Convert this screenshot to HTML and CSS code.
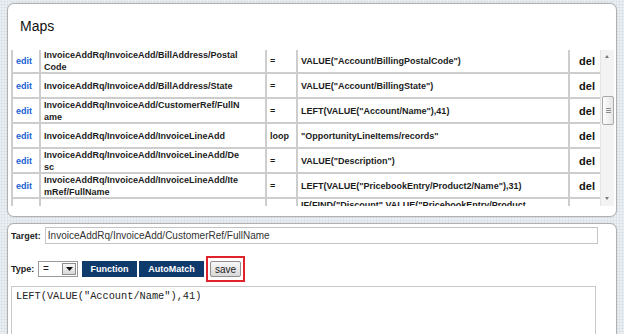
FILE: index.html
```html
<!DOCTYPE html>
<html>
<head>
<meta charset="utf-8">
<link rel="stylesheet" href="styles.css">
</head>
<body>
<div class="panel maps">
  <div class="title">Maps</div>
  <div class="scroller">
    <div class="viewport">
      <div class="grid">
        <div class="c edit">edit</div><div class="c path">InvoiceAddRq/InvoiceAdd/BillAddress/Postal<br>Code</div><div class="c op">=</div><div class="c val">VALUE("Account/BillingPostalCode")</div><div class="c del">del</div>
        <div class="c edit">edit</div><div class="c path">InvoiceAddRq/InvoiceAdd/BillAddress/State</div><div class="c op">=</div><div class="c val">VALUE("Account/BillingState")</div><div class="c del">del</div>
        <div class="c edit">edit</div><div class="c path">InvoiceAddRq/InvoiceAdd/CustomerRef/FullN<br>ame</div><div class="c op">=</div><div class="c val">LEFT(VALUE("Account/Name"),41)</div><div class="c del">del</div>
        <div class="c edit">edit</div><div class="c path">InvoiceAddRq/InvoiceAdd/InvoiceLineAdd</div><div class="c op">loop</div><div class="c val">"OpportunityLineItems/records"</div><div class="c del">del</div>
        <div class="c edit">edit</div><div class="c path">InvoiceAddRq/InvoiceAdd/InvoiceLineAdd/De<br>sc</div><div class="c op">=</div><div class="c val">VALUE("Description")</div><div class="c del">del</div>
        <div class="c edit">edit</div><div class="c path">InvoiceAddRq/InvoiceAdd/InvoiceLineAdd/Ite<br>mRef/FullName</div><div class="c op">=</div><div class="c val">LEFT(VALUE("PricebookEntry/Product2/Name"),31)</div><div class="c del">del</div>
        <div class="c edit">edit</div><div class="c path">InvoiceAddRq/InvoiceAdd/InvoiceLineAdd/Rate</div><div class="c op">=</div><div class="c val">IF(FIND("Discount",VALUE("PricebookEntry/Product<br>2/Name")),0,VALUE("UnitPrice"))</div><div class="c del">del</div>
      </div>
    </div>
    <div class="sbar">
      <div class="arrow up"></div>
      <div class="track">
        <div class="thumb"><span class="grip"></span></div>
      </div>
      <div class="arrow down"></div>
    </div>
  </div>
</div>

<div class="panel editor">
  <div class="row target">
    <span class="lbl">Target:</span>
    <div class="input">InvoiceAddRq/InvoiceAdd/CustomerRef/FullName</div>
  </div>
  <div class="row type">
    <span class="lbl">Type:</span>
    <div class="select"><span class="sel-val">=</span><span class="sel-btn"><svg width="7" height="4" viewBox="0 0 7 4"><path d="M0 0H7L3.5 4Z" fill="#111"/></svg></span></div>
    <div class="btn dark fn">Function</div>
    <div class="btn dark am">AutoMatch</div>
    <div class="hl"><div class="btn save">save</div></div>
  </div>
  <div class="code">LEFT(VALUE("Account/Name"),41)</div>
</div>
</body>
</html>
```

FILE: styles.css
```css
html, body {
  margin: 0;
  padding: 0;
  height: 100%;
  overflow: hidden;
}
body {
  padding: 3px 7px 0 7px;
  box-sizing: border-box;
  font-family: "Liberation Sans", Arial, sans-serif;
  background-color: #e9eef3;
  background-image: radial-gradient(circle, #d2dbe4 0.7px, transparent 1.1px);
  background-size: 3px 3px;
  color: #1c1c1c;
}
.panel {
  box-sizing: border-box;
  width: 610px;
  background: #fff;
  border: 1px solid #b0b0b0;
  border-radius: 7px;
  box-shadow: 0 0 2px rgba(0,0,0,0.12);
}
.maps {
  height: 214px;
  padding: 14px 2px 0 3px;
}
.title {
  font-size: 14px;
  line-height: 16px;
  padding-left: 9px;
  color: #111;
}
.scroller {
  margin-top: 16px;
  height: 156px;
  display: flex;
}
.viewport {
  width: 590px;
  overflow: hidden;
}
.grid {
  margin-top: -1px;
  display: grid;
  grid-template-columns: 28px 226px 31px 272px 32px;
  grid-auto-rows: 25px;
  border-left: 2px solid #cdcdcd;
}
.c {
  box-sizing: border-box;
  border-right: 2px solid #cdcdcd;
  border-bottom: 2px solid #cdcdcd;
  display: flex;
  align-items: center;
  font-size: 9px;
  font-weight: bold;
  line-height: 12px;
  white-space: nowrap;
  overflow: hidden;
  padding: 0 3px;
}
.edit { color: #2062d2; }
.del {
  justify-content: flex-end;
  font-size: 11px;
  padding-right: 5px;
  color: #111;
}
.sbar {
  width: 13px;
  display: flex;
  flex-direction: column;
  background: #f3f3f3;
  border-left: 1px solid #e4e4e4;
}
.arrow {
  height: 14px;
  position: relative;
}
.arrow::after {
  content: "";
  position: absolute;
  left: 4px;
  top: 5px;
  border-left: 2.5px solid transparent;
  border-right: 2.5px solid transparent;
}
.arrow.up::after { border-bottom: 3px solid #7a7a7a; }
.arrow.down::after { border-top: 3px solid #7a7a7a; }
.track {
  flex: 1;
  padding-top: 32px;
}
.thumb {
  box-sizing: border-box;
  height: 29px;
  margin: 0 0 0 1px;
  border: 1px solid #a9a9a9;
  border-radius: 2px;
  background: linear-gradient(to right, #fdfdfd, #e6e6e6);
  display: flex;
  align-items: center;
  justify-content: center;
}
.grip {
  width: 5px;
  height: 5px;
  background: repeating-linear-gradient(to bottom, #8c8c8c 0 1px, transparent 1px 2px);
}
.editor {
  margin-top: 6px;
  height: 140px;
  border-bottom-left-radius: 0;
  border-bottom-right-radius: 0;
  padding: 3px 0 0 3px;
}
.row {
  display: flex;
  align-items: center;
}
.lbl {
  font-size: 9px;
  font-weight: bold;
  color: #1c1c1c;
}
.target .lbl { margin-right: 4px; }
.input {
  box-sizing: border-box;
  width: 553px;
  height: 17px;
  border: 1px solid #c4c4c4;
  font-size: 10px;
  line-height: 15px;
  padding-left: 2px;
  color: #333;
}
.type {
  margin-top: 12px;
}
.type .lbl { margin-right: 3px; width: 24px; }
.select {
  box-sizing: border-box;
  width: 40px;
  height: 16px;
  border: 1px solid #9a9a9a;
  display: flex;
  margin-right: 4px;
  background: #fff;
}
.sel-val {
  flex: 1;
  font-size: 10px;
  line-height: 14px;
  padding-left: 4px;
}
.sel-btn {
  box-sizing: border-box;
  width: 14px;
  margin: 1px;
  border: 1px solid #8d8d8d;
  background: linear-gradient(#f7f7f7, #d9d9d9);
  display: flex;
  align-items: center;
  justify-content: center;
}
.btn {
  box-sizing: border-box;
  height: 16px;
  font-size: 9px;
  display: flex;
  align-items: center;
  justify-content: center;
}
.dark {
  background: #0f3b6c;
  color: #fff;
  font-weight: bold;
}
.fn { width: 55px; margin-right: 2px; }
.am { width: 65px; margin-right: 2px; }
.hl {
  box-sizing: border-box;
  width: 39px;
  height: 26px;
  border: 2px solid #e0232b;
  padding: 3px 2px;
}
.save {
  width: 31px;
  font-size: 10px;
  color: #222;
  border: 1px solid #8f8f8f;
  border-radius: 2px;
  background: linear-gradient(#f8f8f8, #d8d8d8);
}
.code {
  box-sizing: border-box;
  margin-top: 4px;
  width: 585px;
  height: 80px;
  border: 1px solid #c8c8c8;
  font-family: "Liberation Mono", "Courier New", monospace;
  font-size: 10.3px;
  line-height: 12px;
  padding: 3px 4px;
  color: #222;
}
```
